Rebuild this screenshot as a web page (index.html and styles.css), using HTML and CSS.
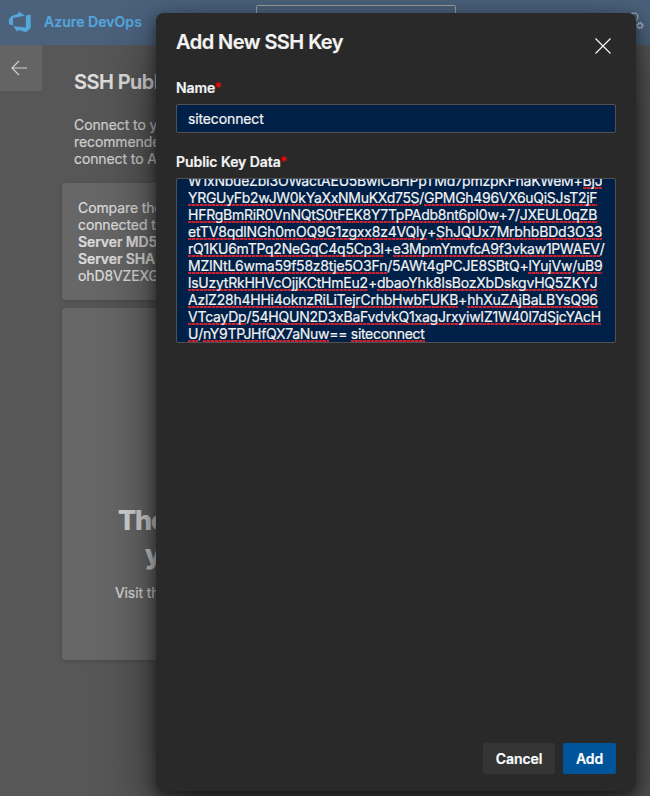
FILE: index.html
```html
<!DOCTYPE html>
<html lang="en">
<head>
<meta charset="utf-8">
<title>Add New SSH Key</title>
<link rel="stylesheet" href="styles.css">
</head>
<body>
<div class="app">
  <header class="topbar">
    <svg class="logo" width="22" height="22" viewBox="0 0 22 22"><path fill="#55a6db" d="M0 8.300 2.200 5.300 9.500 2.500V.3l6.500 4.500-12 2.300v7.300l-4-1.200zM21.700 3.800v13.400l-4.800 4-8-2.400v2.400l-4.700-6 12.700 1.300V4.600z"/></svg>
    <span class="brand">Azure DevOps</span>
    <div class="search"></div>
    <svg class="user" width="16" height="20" viewBox="0 0 16 20" fill="none" stroke="#a9b4c1" stroke-width="1.200"><circle cx="5" cy="5" r="4"/><circle cx="11" cy="13.500" r="2.200"/><path stroke-dasharray="1.300 1.290" d="M14.300 13.500a3.300 3.300 0 1 1-6.600 0 3.300 3.300 0 0 1 6.600 0"/></svg>
  </header>
  <div class="back"><svg width="18" height="16" viewBox="0 0 18 16" fill="none" stroke="#d0d0d0" stroke-width="1.200"><path d="M17 8H2M9 1 2 8l7 7"/></svg></div>
  <main class="page">
    <h1>SSH Public Keys</h1>
    <p class="intro">Connect to your<br>recommended<br>connect to Azure</p>
    <section class="card compare">Compare the<br>connected to<br><b>Server MD5</b><br><b>Server SHA</b><br>ohD8VZEXG</section>
    <section class="card empty">
      <div class="headline">There</div>
      <div class="headline second">you</div>
      <div class="visit">Visit the</div>
    </section>
  </main>
</div>
<div class="panel" role="dialog">
  <div class="panel-head"><h2>Add New SSH Key</h2>
    <svg class="close" width="16" height="16" viewBox="0 0 16 16" stroke="#fff" stroke-width="1.100"><path d="M.5.5l15 15M15.500.5l-15 15"/></svg>
  </div>
  <div class="label">Name<i>*</i></div>
  <div class="input">siteconnect</div>
  <div class="label key-label">Public Key Data<i>*</i></div>
  <div class="textarea">
    <div class="line l1">W1xNbueZbI3OWactAEU5BwlCBHPpTMd7pmzpKFhaKWeM+<u>BjJ</u></div>
    <div class="line l2"><u>YRGUyFb2wJW0kYaXxNMuKXd75S</u>/<u>GPMGh496VX6uQiSJsT2jF</u></div>
    <div class="line l3"><u>HFRgBmRiR0VnNQtS0tFEK8Y7TpPAdb8nt6pI0w</u>+7/<u>JXEUL0qZB</u></div>
    <div class="line l4"><u>etTV8qdlNGh0mOQ9G1zgxx8z4VQly</u>+<u>ShJQUx7MrbhbBDd3O33</u></div>
    <div class="line l5"><u>rQ1KU6mTPq2NeGqC4q5Cp3I</u>+<u>e3MpmYmvfcA9f3vkaw1PWAEV</u>/</div>
    <div class="line l6"><u>MZINtL6wma59f58z8tje5O3Fn</u>/5AWt4gPCJE8SBtQ+<u>lYujVw</u>/<u>uB9</u></div>
    <div class="line l7"><u>lsUzytRkHHVcOjjKCtHmEu2</u>+<u>dbaoYhk8lsBozXbDskgvHQ5ZKYJ</u></div>
    <div class="line l8"><u>AzlZ28h4HHi4oknzRiLiTejrCrhbHwbFUKB</u>+<u>hhXuZAjBaLBYsQ96</u></div>
    <div class="line l9"><u>VTcayDp</u>/<u>54HQUN2D3xBaFvdvkQ1xagJrxyiwIZ1W40l7dSjcYAcH</u></div>
    <div class="line l10"><u>U</u>/<u>nY9TPJHfQX7aNuw</u>== <u>siteconnect</u></div>
  </div>
  <div class="actions"><button>Cancel</button><button class="primary">Add</button></div>
</div>
</body>
</html>
```
FILE: styles.css
```css
* { box-sizing: border-box; }
body { margin: 0; width: 650px; height: 796px; overflow: hidden; position: relative; background: #575757; color: #d0d0d0; font: 14px/17px Inter, sans-serif; -webkit-text-stroke: .2px; }
h1, h2, p { margin: 0; }
.app { height: 796px; overflow: hidden; }
.topbar { height: 45px; background: #4b617c; display: flex; align-items: flex-start; }
.logo { margin: 11px 0 0 9px; flex: none; }
.brand { margin: 13px 0 0 13px; width: 212px; flex: none; font-size: 14px; font-weight: 600; color: #55a6db; letter-spacing: .05px; white-space: nowrap; }
.search { margin-top: 5px; width: 200px; height: 32px; border: 1px solid #a19f9d; border-radius: 2px; flex: none; }
.user { margin: 12px 0 0 173px; flex: none; }
.back { width: 42px; height: 46px; background: #646464; display: flex; align-items: center; padding-left: 10px; }
.page { margin: -46px 0 0 62px; width: 556px; white-space: nowrap; }
.page h1 { padding: 24px 0 0 12px; font-size: 20px; line-height: 26px; font-weight: 600; letter-spacing: -.55px; color: #dedede; }
.intro { padding: 21px 0 0 12px; letter-spacing: -.1px; }
.card { background: #676767; border-radius: 4px; box-shadow: 0 1px 4px rgba(0,0,0,.16); }
.compare { margin-top: 16px; height: 117px; padding: 16px; color: #dedede; letter-spacing: -.1px; }
.compare b { font-weight: 600; }
.empty { margin-top: 8px; height: 352px; padding-top: 196px; }
.headline { padding-left: 56px; font-size: 27px; line-height: 34px; font-weight: 800; letter-spacing: -1.2px; color: #d5d5d5; }
.headline.second { padding-left: 83px; }
.visit { padding: 12px 0 0 53px; color: #dedede; letter-spacing: -.1px; }
.panel { position: absolute; left: 156px; top: 13px; width: 480px; height: 778px; padding: 0 20px 17px; border-radius: 8px; background: #292929; color: #f3f3f3; display: flex; flex-direction: column; box-shadow: 0 26px 58px rgba(0,0,0,.58), 0 5px 14px rgba(0,0,0,.48); }
.panel-head { display: flex; justify-content: space-between; height: 66px; padding-top: 15px; }
h2 { font-size: 20px; line-height: 28px; font-weight: 600; letter-spacing: -.55px; }
.close { margin: 10px 5px 0 0; }
.label { font-weight: 600; line-height: 18px; letter-spacing: -.06px; }
.label i { margin-left: -1px; color: #f00; font-style: normal; font-weight: 600; -webkit-text-stroke: 0; }
.input { margin-top: 7px; height: 29px; padding: 5px 11px; border: 1px solid #515151; border-radius: 2px; background: #002047; letter-spacing: -.13px; }
.key-label { margin-top: 20px; }
.textarea { margin-top: 7px; height: 165px; padding-left: 11px; border: 1px solid #515151; border-radius: 2px; background: #002047; overflow: hidden; display: flex; flex-direction: column; justify-content: flex-end; align-items: flex-start; }
.line { height: 17px; flex: none; white-space: nowrap; letter-spacing: -.23px; }
.l2 { letter-spacing: -.3px; }
.l3, .l5 { letter-spacing: -.26px; }
.l4 { letter-spacing: -.2px; }
.l10 { letter-spacing: -.3px; }
.line u { display: inline-block; height: 17px; vertical-align: top; text-decoration: none; background: repeating-linear-gradient(90deg, #c62332 0 3px, #60213d 3px 4px) left bottom / 100% 2px no-repeat; }
.actions { margin-top: auto; display: flex; justify-content: flex-end; gap: 8px; }
button { height: 31px; width: 72px; padding: 0; border: 0; border-radius: 2px; background: #353535; color: #fff; font: 600 14px/31px Inter, sans-serif; letter-spacing: -.1px; }
.primary { width: 53px; background: #00549a; }
```
